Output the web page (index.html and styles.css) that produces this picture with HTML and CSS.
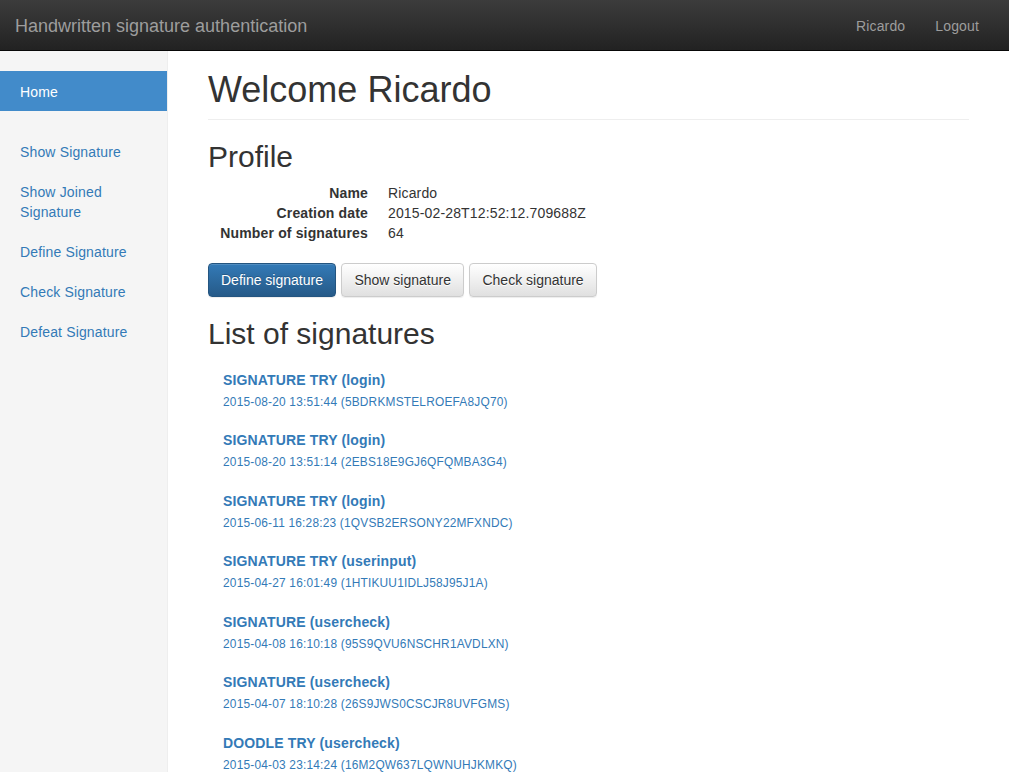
FILE: index.html
```html
<!DOCTYPE html>
<html lang="en">
<head>
    <meta charset="UTF-8">
    <meta name="viewport" content="width=device-width, initial-scale=1.0">
    <link rel="stylesheet" href="styles.css">
    <title>Handwritten signature authentication</title>
</head>
<body>

<nav class="navbar">
    <a class="navbar-brand" href="#">Handwritten signature authentication</a>
    <ul class="navbar-right">
        <li><a href="#">Ricardo</a></li>
        <li><a href="#">Logout</a></li>
    </ul>
</nav>

<div class="layout">
    <div class="sidebar">
        <ul class="nav-sidebar">
            <li class="active"><a href="#">Home</a></li>
        </ul>
        <ul class="nav-sidebar">
            <li><a href="#">Show Signature</a></li>
            <li><a href="#">Show Joined Signature</a></li>
            <li><a href="#">Define Signature</a></li>
            <li><a href="#">Check Signature</a></li>
            <li><a href="#">Defeat Signature</a></li>
        </ul>
    </div>

    <div class="main">
        <h1 class="page-header">Welcome Ricardo</h1>

        <h2>Profile</h2>
        <dl class="dl-horizontal">
            <dt>Name</dt>
            <dd>Ricardo</dd>
            <dt>Creation date</dt>
            <dd>2015-02-28T12:52:12.709688Z</dd>
            <dt>Number of signatures</dt>
            <dd>64</dd>
        </dl>

        <div class="btn-row">
            <a class="btn btn-primary" href="#">Define signature</a>
            <a class="btn btn-default" href="#">Show signature</a>
            <a class="btn btn-default" href="#">Check signature</a>
        </div>

        <h2>List of signatures</h2>
        <div class="sig-list">
            <a class="sig-item" href="#">
                <span class="sig-title">SIGNATURE TRY (login)</span>
                <small>2015-08-20 13:51:44 (5BDRKMSTELROEFA8JQ70)</small>
            </a>
            <a class="sig-item" href="#">
                <span class="sig-title">SIGNATURE TRY (login)</span>
                <small>2015-08-20 13:51:14 (2EBS18E9GJ6QFQMBA3G4)</small>
            </a>
            <a class="sig-item" href="#">
                <span class="sig-title">SIGNATURE TRY (login)</span>
                <small>2015-06-11 16:28:23 (1QVSB2ERSONY22MFXNDC)</small>
            </a>
            <a class="sig-item" href="#">
                <span class="sig-title">SIGNATURE TRY (userinput)</span>
                <small>2015-04-27 16:01:49 (1HTIKUU1IDLJ58J95J1A)</small>
            </a>
            <a class="sig-item" href="#">
                <span class="sig-title">SIGNATURE (usercheck)</span>
                <small>2015-04-08 16:10:18 (95S9QVU6NSCHR1AVDLXN)</small>
            </a>
            <a class="sig-item" href="#">
                <span class="sig-title">SIGNATURE (usercheck)</span>
                <small>2015-04-07 18:10:28 (26S9JWS0CSCJR8UVFGMS)</small>
            </a>
            <a class="sig-item" href="#">
                <span class="sig-title">DOODLE TRY (usercheck)</span>
                <small>2015-04-03 23:14:24 (16M2QW637LQWNUHJKMKQ)</small>
            </a>
        </div>
    </div>
</div>

</body>
</html>
```

FILE: styles.css
```css
body {
    font-family: "Liberation Sans", Arial, sans-serif;
    font-size: 14px;
    line-height: 20px;
    letter-spacing: 0.15px;
    color: #333;
    margin: 0;
    background-color: #fff;
}

a {
    color: #337ab7;
    text-decoration: none;
}

/* top bar */
.navbar {
    display: flex;
    justify-content: space-between;
    height: 50px;
    background-image: linear-gradient(to bottom, #3c3c3c 0%, #222 100%);
    border-bottom: 1px solid #080808;
}

.navbar-brand {
    padding: 16px 15px 14px 15px;
    font-size: 18px;
    line-height: 20px;
    letter-spacing: 0;
    color: #9d9d9d;
}

.navbar-right {
    display: flex;
    list-style: none;
    margin: 0;
    padding: 0 15px 0 0;
}

.navbar-right a {
    display: block;
    padding: 16px 15px 14px 15px;
    color: #9d9d9d;
}

/* page columns */
.layout {
    display: flex;
    min-height: calc(100vh - 51px);
}

.sidebar {
    width: 167px;
    flex-shrink: 0;
    padding-top: 20px;
    background-color: #f5f5f5;
    border-right: 1px solid #eee;
}

.nav-sidebar {
    list-style: none;
    margin: 0 0 20px 0;
    padding: 0;
}

.nav-sidebar a {
    display: block;
    padding: 11px 20px 9px 20px;
}

.nav-sidebar .active a {
    background-color: #428bca;
    color: #fff;
}

.main {
    flex: 1;
    padding: 19px 40px 20px 40px;
}

h1, h2 {
    font-weight: 500;
    line-height: 1.1;
    letter-spacing: 0;
}

.page-header {
    font-size: 36px;
    margin: 0 0 20px 0;
    padding-bottom: 9px;
    border-bottom: 1px solid #eee;
}

h2 {
    font-size: 30px;
    margin: 20px 0 10px 0;
}

.page-header + h2 {
    margin-top: 0;
}

.dl-horizontal {
    display: grid;
    grid-template-columns: 160px 1fr;
    column-gap: 20px;
    margin: 0 0 20px 0;
}

.dl-horizontal dt {
    font-weight: bold;
    text-align: right;
}

.dl-horizontal dd {
    margin: 0;
}

/* buttons */
.btn-row {
    display: flex;
    gap: 5.5px;
}

.btn {
    display: inline-block;
    padding: 6px 12px;
    font-size: 14px;
    line-height: 20px;
    letter-spacing: 0;
    border: 1px solid transparent;
    border-radius: 4px;
    box-shadow: inset 0 1px 0 rgba(255, 255, 255, 0.15), 0 1px 1px rgba(0, 0, 0, 0.075);
}

.btn-primary {
    color: #fff;
    background-image: linear-gradient(to bottom, #337ab7 0%, #265a88 100%);
    border-color: #245580;
    text-shadow: 0 -1px 0 rgba(0, 0, 0, 0.2);
}

.btn-default {
    color: #333;
    background-image: linear-gradient(to bottom, #fff 0%, #e0e0e0 100%);
    border-color: #ccc;
    text-shadow: 0 1px 0 #fff;
}

/* signature list */
.sig-item {
    display: block;
    padding: 10px 15px 8.5px 15px;
}

.sig-title {
    display: block;
    font-weight: bold;
}

.sig-item small {
    display: block;
    padding-top: 2px;
    font-size: 85%;
    line-height: 20px;
    letter-spacing: 0.2px;
}
```
